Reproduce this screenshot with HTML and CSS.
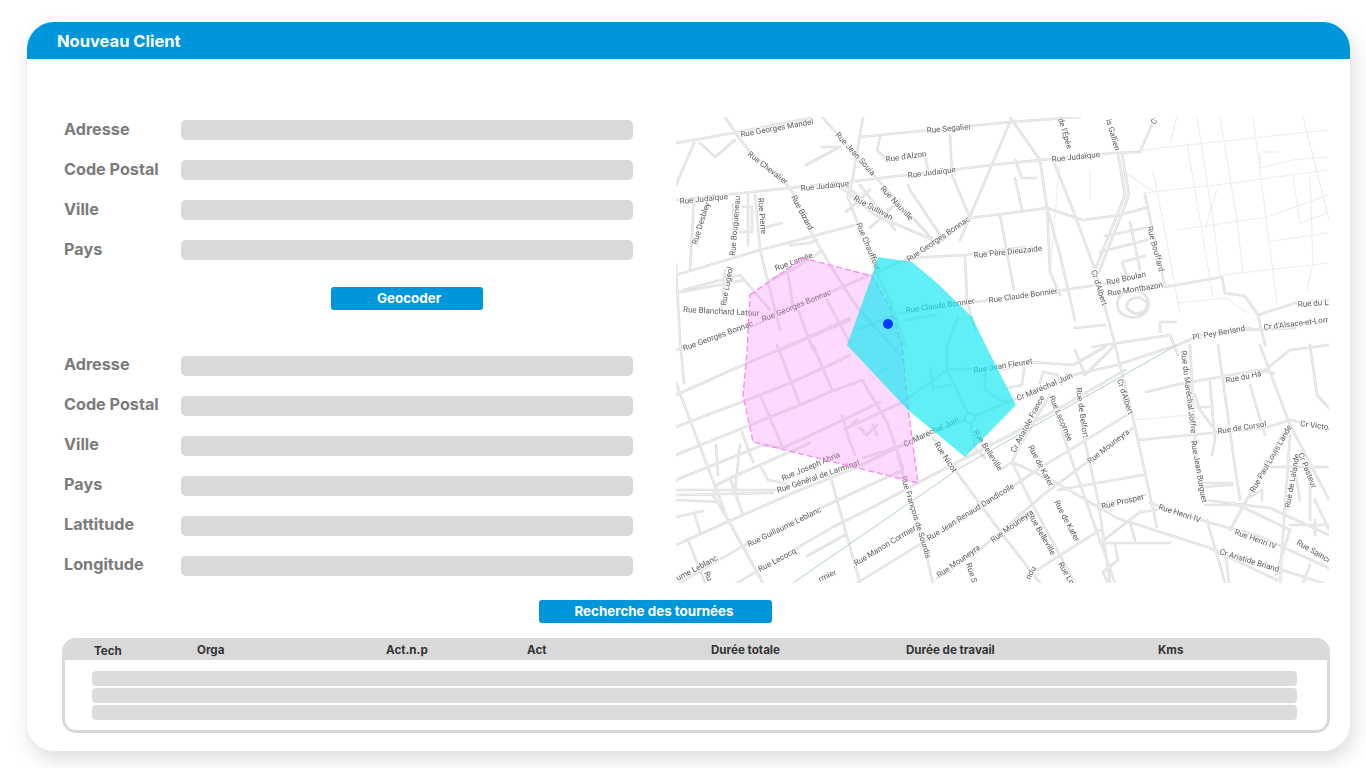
FILE: index.html
```html
<!DOCTYPE html>
<html lang="fr">
<head>
<meta charset="utf-8">
<title>Nouveau Client</title>
<link rel="stylesheet" href="styles.css">
</head>
<body>
<div class="card">
  <header class="card-head">Nouveau Client</header>
  <div class="card-body">
    <div class="main">
      <div class="forms">
        <div class="group">
          <div class="row"><span class="lbl">Adresse</span><span class="field"></span></div>
          <div class="row"><span class="lbl">Code Postal</span><span class="field"></span></div>
          <div class="row"><span class="lbl">Ville</span><span class="field"></span></div>
          <div class="row"><span class="lbl">Pays</span><span class="field"></span></div>
        </div>
        <div class="geo-wrap"><button class="btn btn-geo">Geocoder</button></div>
        <div class="group group-low">
          <div class="row"><span class="lbl">Adresse</span><span class="field"></span></div>
          <div class="row"><span class="lbl">Code Postal</span><span class="field"></span></div>
          <div class="row"><span class="lbl">Ville</span><span class="field"></span></div>
          <div class="row"><span class="lbl">Pays</span><span class="field"></span></div>
          <div class="row"><span class="lbl">Lattitude</span><span class="field"></span></div>
          <div class="row"><span class="lbl">Longitude</span><span class="field"></span></div>
        </div>
      </div>
      <svg class="map" viewBox="676 117 653 466" width="653" height="466" aria-label="Carte">
        <defs>
          <g id="minor">
            <path d="M1197 117L1213 220L1220 277M1220 117L1237 220L1243 272M1253 117L1277 303M1303 117L1329 220M1187 143L1213 297M1117 153L1187 145L1328 130M1143 193L1233 183L1328 170M1177 230L1267 217L1328 195M1267 242L1328 233M1223 275L1328 263M1153 170L1167 243L1180 313M1177 303L1227 298L1247 313M1260 168L1293 160L1328 157M1260 168V152H1278M1293 177L1300 223L1328 213M1310 173L1313 263L1307 290M1177 117L1170 143M1135 420L1190 415M1155 193L1122 170L1130 195M1050 272L1060 160M1090 170V200M1205 228L1217 190"/>
          </g>
          <g id="roads">
            <path d="M676 143L733 133L810 118M860 137L1010 122L1080 117"/>
            <path d="M725 117L737 135L750 152L787 185L793 193L808 227L833 270L857 307L900 355"/>
            <path d="M676 200L847 182L1010 163L1113 153L1140 152"/>
            <path d="M822 117L880 182L933 240"/>
            <path d="M863 117L852 182L848 197L873 265L892 305L905 345"/>
            <path d="M870 275L910 258L943 240L970 218L1010 213L1047 208L1083 220L1120 215L1145 208"/>
            <path d="M676 350L750 327L870 275"/>
            <path d="M700 143L715 157L735 140M694 143L676 185M880 137L877 150L885 158H893M925 155L928 170"/>
            <path d="M806 165L840 147L822 147M1010 117L1040 160L1047 208L1060 255L1075 320"/>
            <path d="M1053 160L1075 215L1095 270L1113 337L1133 418L1157 527"/>
            <path d="M1118 154L1125 195L1095 270M1122 154L1129 195L1099 272M1140 152L1155 117"/>
            <path d="M950 135L952 175L970 218M1010 122L960 240"/>
            <path d="M846 186L892 225M860 185L895 230M838 185L875 215L933 240M870 190L846 212M870 228L900 200M908 185L910 190L940 235"/>
            <path d="M1015 160L1022 178L1036 178M1015 178L1022 210"/>
            <path d="M676 275L760 250L855 225"/>
            <path d="M694 200L690 270M733 205L735 255M755 195L760 250L780 330"/>
            <path d="M748 195V245M743 207H752V232H740M763 228L782 223M790 245L810 243L817 240"/>
            <path d="M683 290L740 275L770 310M676 293L745 280M676 265L680 340L684 383M725 270L722 310"/>
            <path d="M770 280L795 268L820 252"/>
            <path d="M910 258L965 255L967 300L975 330M965 255L1025 247"/>
            <path d="M857 330L900 313L990 300L1050 292L1110 283M1000 215L1014 290"/>
            <path d="M1047 208L1050 272L1060 295"/>
            <path d="M1145 195L1165 287L1222 277L1225 293L1245 296L1258 315L1265 345"/>
            <path d="M1105 236L1145 228M1100 252L1147 240M1122 262L1145 256M1122 262L1128 280M1130 222L1140 270"/>
            <path d="M1258 315L1295 303L1329 300M1247 330L1295 328M1178 345L1200 335L1250 328"/>
            <path d="M1092 347L1170 335L1178 355M1160 322L1176 322M1160 322L1160 332M1075 328L1105 325"/>
            <path d="M1118 308A14 12 0 1 1 1148 300A14 12 0 1 1 1118 308M1128 309A9 7 0 1 1 1146 302A9 7 0 1 1 1128 309"/>
            <path d="M676 395L727 372L813 335L850 318"/>
            <path d="M676 427L760 395L790 383L830 365L850 355"/>
            <path d="M676 455L770 417L800 405L830 392L863 380"/>
            <path d="M676 480L713 465L763 445L783 448L843 420L880 402"/>
            <path d="M717 485L730 478L760 465L810 443"/>
            <path d="M847 428L903 402L947 370L1003 367M863 458L903 445"/>
            <path d="M777 345L800 405M813 345L832 390M760 395L783 448M742 432L753 462M862 380L887 422L903 468"/>
            <path d="M787 267L793 307M798 310L813 350M827 300L850 343M780 350L850 320M880 372L888 368"/>
            <path d="M842 416L845 425M845 428L855 455M845 430L857 420M860 428L867 435L877 425M873 425L877 435"/>
            <path d="M676 545L743 515L793 493L857 467L903 445L970 418L1017 398L1073 375L1117 365L1177 345"/>
            <path d="M676 585L750 542L823 507L870 485L903 470"/>
            <path d="M737 583L797 548L833 527L877 505L923 480L1010 435L1065 405L1125 370"/>
            <path d="M807 556L845 535"/>
            <path d="M857 583L930 538L1010 488L1045 465L1127 415"/>
            <path d="M937 578L977 552L1043 495L1133 428"/>
            <path d="M933 438L960 477L1003 535L1040 583"/>
            <path d="M897 452L903 475L927 558L933 583"/>
            <path d="M676 383L690 420L727 518L763 583"/>
            <path d="M760 465L768 480L785 483"/>
            <path d="M830 475L860 583"/>
            <path d="M676 490H777M676 495L773 493M676 500L717 502M717 485L713 495L727 518M730 478L743 515"/>
            <path d="M676 517L703 511M695 515L700 532M688 540L705 583"/>
            <path d="M716 445L718 475M740 445L735 490"/>
            <path d="M947 345L947 370L970 418L975 448L985 458M930 368L933 388L950 385M985 372V390L1000 400L1010 402"/>
            <path d="M958 317L947 345M906 320L935 315M1000 370L1030 362L1073 365L1105 347M1025 362L1022 385L1008 388M1075 350L1085 375L1115 345"/>
            <path d="M1040 383L1043 372L1058 375L1062 385"/>
            <path d="M1012 462L1020 445L1050 395M1000 470L1012 462L1055 482L1117 518L1210 548L1277 580M1012 462L1030 500L1075 583M1050 395L1075 470L1115 583M1083 433L1098 500L1110 583"/>
            <path d="M1058 490L1143 475M1097 505L1145 495M1100 543L1140 512L1157 510M1100 543H1170M1130 522L1135 540M1115 545L1118 560L1103 572L1108 583M1037 570L1100 530"/>
            <path d="M1150 503L1207 522L1256 535L1329 568M1207 520L1225 583M1225 550L1229 583M1203 483H1232M1203 487L1232 485M1205 500L1245 505L1270 508L1329 535M1205 505H1238L1290 530"/>
            <path d="M1190 345L1195 440L1203 500M1146 392L1175 385L1258 370L1274 373M1210 382L1215 440M1195 395L1200 410L1215 430M1197 407H1213M1215 440L1212 455"/>
            <path d="M1260 345L1275 385L1290 425M1218 345L1234 460L1240 500M1138 440L1264 428L1290 420L1329 428M1250 385L1265 435M1310 345L1317 395L1329 408M1265 370L1290 350L1329 345M1290 425L1329 500M1290 435L1285 505L1280 583"/>
            <path d="M1270 467H1329M1295 470L1300 500M1310 470V520M1285 430L1230 530M1250 497L1262 490V500M1290 525H1329M1315 520V535M1315 500L1329 530M1290 530L1276 575M1276 568L1329 585M1310 565L1303 583"/>
          </g>
        </defs>
        <rect class="map-bg" x="676" y="117" width="653" height="466"/>
        <use class="road-thin" href="#minor"/>
        <use class="road-case" href="#roads"/>
        <use class="road-core" href="#roads"/>
        <circle class="road-ring" cx="970" cy="418" r="5"/>
        <path class="rail" d="M793 583L960 468L1177 345"/>
        <g class="labels" transform="translate(0 1)">
          <text transform="translate(741 136) rotate(-10)">Rue Georges Mandel</text>
          <text transform="translate(927 132) rotate(-5)">Rue Segalier</text>
          <text transform="translate(835 134) rotate(48)">Rue Jean Souia</text>
          <text transform="translate(886 161) rotate(-8)">Rue d'Alzon</text>
          <text transform="translate(908 177) rotate(-7)">Rue Judaïque</text>
          <text transform="translate(1052 161) rotate(-6)">Rue Judaïque</text>
          <text transform="translate(801 190) rotate(-6)">Rue Judaïque</text>
          <text transform="translate(680 203) rotate(-6)">Rue Judaïque</text>
          <text transform="translate(747 154) rotate(38)">Rue Chevalier</text>
          <text transform="translate(880 188) rotate(47)">Rue Nauville</text>
          <text transform="translate(853 199) rotate(28)">Rue Sullivan</text>
          <text transform="translate(791 196) rotate(62)">Rue Bizard</text>
          <text transform="translate(697 244) rotate(-73)">Rue Desbley</text>
          <text transform="translate(735 255) rotate(-85)">Rue Bougueneau</text>
          <text transform="translate(758 197) rotate(85)">Rue Pierre</text>
          <text transform="translate(856 223) rotate(67)">Rue Chauffour</text>
          <text transform="translate(776 270) rotate(-20)">Rue Lamée</text>
          <text transform="translate(726 305) rotate(-80)">Rue Lugeol</text>
          <text transform="translate(683 311) rotate(3)">Rue Blanchard Latour</text>
          <text transform="translate(763 321) rotate(-22)">Rue Georges Bonnac</text>
          <text transform="translate(684 350) rotate(-20)">Rue Georges Bonnac</text>
          <text transform="translate(909 261) rotate(-34)">Rue Georges Bonnac</text>
          <text transform="translate(974 257) rotate(-6)">Rue Père Dieuzaide</text>
          <text transform="translate(906 312) rotate(-8)">Rue Claude Bonnier</text>
          <text transform="translate(989 302) rotate(-8)">Rue Claude Bonnier</text>
          <text transform="translate(1058 118) rotate(73)">de l'Épée</text>
          <text transform="translate(1106 119) rotate(74)">is Gallien</text>
          <text transform="translate(1147 226) rotate(75)">Rue Bouffard</text>
          <text transform="translate(1107 284) rotate(-12)">Rue Boulan</text>
          <text transform="translate(1108 295) rotate(-9)">Rue Montbazon</text>
          <text transform="translate(1091 270) rotate(72)">Cr d'Albert</text>
          <text transform="translate(1298 306) rotate(-4)">Rue du L</text>
          <text transform="translate(1264 329) rotate(-7)">Cr d'Alsace-et-Lorr</text>
          <text transform="translate(1193 339) rotate(-10)">Pl. Pey Berland</text>
          <text transform="translate(974 372) rotate(-9)">Rue Jean Fleuret</text>
          <text transform="translate(1018 400) rotate(-23)">Cr Maréchal Juin</text>
          <text transform="translate(1015 452) rotate(-62)">Cr Anatole France</text>
          <text transform="translate(1049 396) rotate(67)">Rue Lacornée</text>
          <text transform="translate(1076 387) rotate(82)">Rue de Belfort</text>
          <text transform="translate(1117 379) rotate(72)">Cr d'Albert</text>
          <text transform="translate(1090 463) rotate(-38)">Rue Mouneyra</text>
          <text transform="translate(1028 446) rotate(62)">Rue de Kater</text>
          <text transform="translate(1054 501) rotate(62)">Rue de Kater</text>
          <text transform="translate(1102 508) rotate(-13)">Rue Prosper</text>
          <text transform="translate(1158 508) rotate(18)">Rue Henri IV</text>
          <text transform="translate(1234 533) rotate(20)">Rue Henri IV</text>
          <text transform="translate(1219 553) rotate(17)">Cr Aristide Briand</text>
          <text transform="translate(1296 543) rotate(30)">Rue Saincr</text>
          <text transform="translate(1181 350) rotate(83)">Rue du Maréchal Joffre</text>
          <text transform="translate(1191 440) rotate(80)">Rue Jean Burguet</text>
          <text transform="translate(1226 382) rotate(-11)">Rue du Hâ</text>
          <text transform="translate(1218 433) rotate(-9)">Rue de Cursol</text>
          <text transform="translate(1300 425) rotate(8)">Cr Victor</text>
          <text transform="translate(1254 492) rotate(-60)">Rue Paul Louis Lande</text>
          <text transform="translate(1290 507) rotate(-80)">Rue de Lalande</text>
          <text transform="translate(1298 453) rotate(68)">Cr Pasteur</text>
          <text transform="translate(1028 514) rotate(60)">Rue Belleville</text>
          <text transform="translate(1058 563) rotate(60)">Rue Lo</text>
          <text transform="translate(993 542) rotate(-36)">Rue Mouneyra</text>
          <text transform="translate(929 540) rotate(-32)">Rue Jean Renaud Dandicolle</text>
          <text transform="translate(939 577) rotate(-35)">Rue Mouneyra</text>
          <text transform="translate(966 563) rotate(72)">Rue S</text>
          <text transform="translate(856 565) rotate(-31)">Rue Manon Cormier</text>
          <text transform="translate(820 581) rotate(-25)">rmier</text>
          <text transform="translate(760 571) rotate(-28)">Rue Lecocq</text>
          <text transform="translate(749 546) rotate(-26)">Rue Guillaume Leblanc</text>
          <text transform="translate(678 580) rotate(-28)">ume Leblanc</text>
          <text transform="translate(704 572) rotate(65)">Ru</text>
          <text transform="translate(901 476) rotate(73)">Rue François de Sourdis</text>
          <text transform="translate(778 492) rotate(-19)">Rue Général de Larminat</text>
          <text transform="translate(783 480) rotate(-23)">Rue Joseph Abria</text>
          <text transform="translate(905 446) rotate(-25)">Cr Maréchal Juin</text>
          <text transform="translate(934 443) rotate(57)">Rue Nicot</text>
          <text transform="translate(973 431) rotate(57)">Rue Belleville</text>
          <text transform="translate(1030 579) rotate(-62)">ndu</text>
          <text transform="translate(1155 124) rotate(-60)">C</text>
        </g>
        <polygon class="zone-pink" points="750,295 803,258 872,276 890,307 902,345 908,408 918,483 753,442 743,395 747,352"/>
        <polygon class="zone-cyan" points="878,257 912,262 937,283 972,317 988,350 1016,405 965,457 908,410 847,345 872,276"/>
        <circle class="pin" cx="888" cy="324" r="5"/>
      </svg>
    </div>
    <button class="btn btn-search">Recherche des tournées</button>
    <div class="table">
      <div class="thead">
        <span>Tech</span><span>Orga</span><span>Act.n.p</span><span>Act</span><span>Durée totale</span><span>Durée de travail</span><span>Kms</span>
      </div>
      <div class="tbody">
        <div class="trow"></div>
        <div class="trow"></div>
        <div class="trow"></div>
      </div>
    </div>
  </div>
</div>
</body>
</html>
```
FILE: styles.css
```css
* { box-sizing: border-box; }
html, body { margin: 0; height: 100%; }
body {
  background: #fff;
  padding: 22px 16px 17px 27px;
  font-family: Inter, "Liberation Sans", sans-serif;
  overflow: hidden;
}
.card {
  height: 729px;
  background: #fff;
  border-radius: 27px;
  box-shadow: 3px 8px 20px rgba(0, 0, 0, .14);
  display: flex;
  flex-direction: column;
  overflow: hidden;
}
.card-head {
  height: 37px;
  flex: none;
  background: #0096db;
  color: #fff;
  font-weight: 700;
  font-size: 16.5px;
  line-height: 39px;
  padding-left: 30px;
}
.card-body {
  padding: 58px 20px 0 35px;
  display: flex;
  flex-direction: column;
  align-items: flex-start;
}
.main {
  display: flex;
  width: 100%;
  padding: 0 1px 0 2px;
  justify-content: space-between;
}
.forms { width: 569px; padding-top: 3px; }
.group { display: flex; flex-direction: column; gap: 20px; }
.row { display: flex; align-items: center; height: 20px; }
.lbl {
  width: 117px;
  flex: none;
  color: #7b7b7b;
  font-weight: 700;
  font-size: 16.2px;
  padding-bottom: 2px;
}
.group-low .lbl { padding-bottom: 4px; }
.field {
  flex: 1;
  height: 20px;
  border-radius: 5px;
  background: #d9d9d9;
}
.geo-wrap {
  display: flex;
  justify-content: center;
  margin: 27px 0 46px 117px;
}
.btn {
  border: 0;
  height: 23px;
  border-radius: 3px;
  background: #0096db;
  color: #fff;
  font: 700 13.4px Inter, "Liberation Sans", sans-serif;
}
.btn-geo { width: 152px; padding: 0 0 2px 4px; }
.btn-search { width: 233px; margin: 17px 0 15px 477px; padding: 0 3px 2px 0; }
.map { display: block; flex: none; filter: blur(.35px); }
.map-bg { fill: #fff; }
.road-thin { fill: none; stroke: #eeeeee; stroke-width: 1.2; }
.road-case { fill: none; stroke: #dedede; stroke-width: 2.6; stroke-linejoin: round; stroke-linecap: round; }
.road-core { fill: none; stroke: #eeeeee; stroke-width: 1; stroke-linejoin: round; stroke-linecap: round; }
.road-ring { fill: #fff; stroke: #dedede; stroke-width: 2; }
.rail { fill: none; stroke: #b4d0c8; stroke-width: 1; }
.labels text {
  font: 8px Roboto, "Liberation Sans", sans-serif;
  fill: #5a5a5a;
  stroke: #fff;
  stroke-width: 1.6;
  paint-order: stroke;
}
.zone-pink { fill: rgba(250, 130, 250, .3); stroke: #f98cf5; stroke-width: 1.4; stroke-dasharray: 6 3; }
.zone-cyan { fill: rgba(20, 232, 240, .68); }
.pin { fill: #0a3cff; }
.table {
  width: 100%;
  height: 95px;
  border: 3px solid #d9d9d9;
  border-radius: 14px;
  overflow: hidden;
}
.thead {
  height: 19px;
  background: #d9d9d9;
  display: grid;
  grid-template-columns: 103px 189px 141px 184px 195px 252px auto;
  padding: 0 0 2px 29px;
  align-items: center;
  font-weight: 700;
  font-size: 11.6px;
  color: #333;
}
.thead span:first-child { padding-top: 2px; }
.tbody {
  padding: 11px 30px 0 27px;
  display: flex;
  flex-direction: column;
  gap: 2px;
}
.trow { height: 15px; border-radius: 4px; background: #dcdcdc; }
```
